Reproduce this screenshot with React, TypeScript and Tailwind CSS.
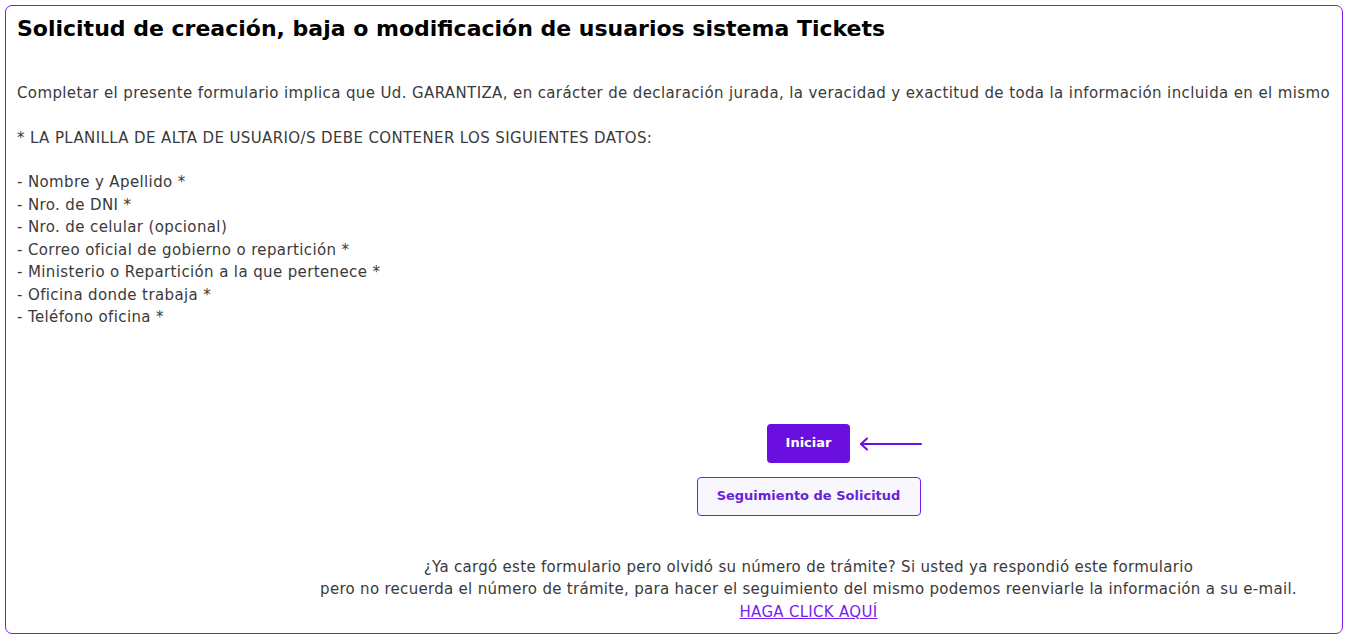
export default function App() {
  const fields = [
    "- Nombre y Apellido *",
    "- Nro. de DNI *",
    "- Nro. de celular (opcional)",
    "- Correo oficial de gobierno o repartición *",
    "- Ministerio o Repartición a la que pertenece *",
    "- Oficina donde trabaja *",
    "- Teléfono oficina *",
  ];

  return (
    <div className="bg-white p-[5px] pr-[4px]" style={{ fontFamily: "'DejaVu Sans', 'Open Sans', sans-serif" }}>
      <div className="border border-[#7a1cf0] rounded-[7px] pl-[11px] pr-[6px] pt-[9px] pb-[10px] text-[#3a3a3a]">
        {/* Title */}
        <h1 className="text-[22px] leading-[28px] font-bold text-black">
          Solicitud de creación, baja o modificación de usuarios sistema Tickets
        </h1>

        {/* Body */}
        <div className="mt-[39px] text-[15px] leading-[22.5px] tracking-[0.38px]">
          <p className="whitespace-nowrap">
            Completar el presente formulario implica que Ud. GARANTIZA, en carácter de declaración jurada, la
            veracidad y exactitud de toda la información incluida en el mismo
          </p>
          <p className="mt-[22px]">* LA PLANILLA DE ALTA DE USUARIO/S DEBE CONTENER LOS SIGUIENTES DATOS:</p>
          <ul className="mt-[22px]">
            {fields.map((f) => (
              <li key={f}>{f}</li>
            ))}
          </ul>
        </div>

        {/* Actions */}
        <div className="flex flex-col items-center pl-[264px] mt-[95px]">
          <div className="relative">
            <button className="h-[39px] w-[83px] rounded-[4px] bg-[#6a0fe0] text-white text-[13px] font-bold">
              Iniciar
            </button>
            <svg
              className="absolute left-[92px] top-[13px]"
              width="64"
              height="14"
              viewBox="0 0 64 14"
              fill="none"
              stroke="#6a0fe0"
              strokeWidth="2"
              strokeLinecap="round"
              strokeLinejoin="round"
            >
              <path d="M2 7h60" />
              <path d="M8 1.5L2 7l6 5.5" />
            </svg>
          </div>
          <button className="mt-[14px] h-[39px] w-[224px] rounded-[4px] border border-[#7a1cf0] bg-[#f7f7fd] text-[#6a1fd8] text-[13px] font-bold">
            Seguimiento de Solicitud
          </button>

          <div className="mt-[40px] text-center text-[15px] leading-[22.5px] tracking-[0.3px]">
            <p>¿Ya cargó este formulario pero olvidó su número de trámite? Si usted ya respondió este formulario</p>
            <p className="whitespace-nowrap">
              pero no recuerda el número de trámite, para hacer el seguimiento del mismo podemos reenviarle la
              información a su e-mail.
            </p>
            <a href="#" className="text-[#7a1cf0] underline">
              HAGA CLICK AQUÍ
            </a>
          </div>
        </div>
      </div>
    </div>
  );
}
